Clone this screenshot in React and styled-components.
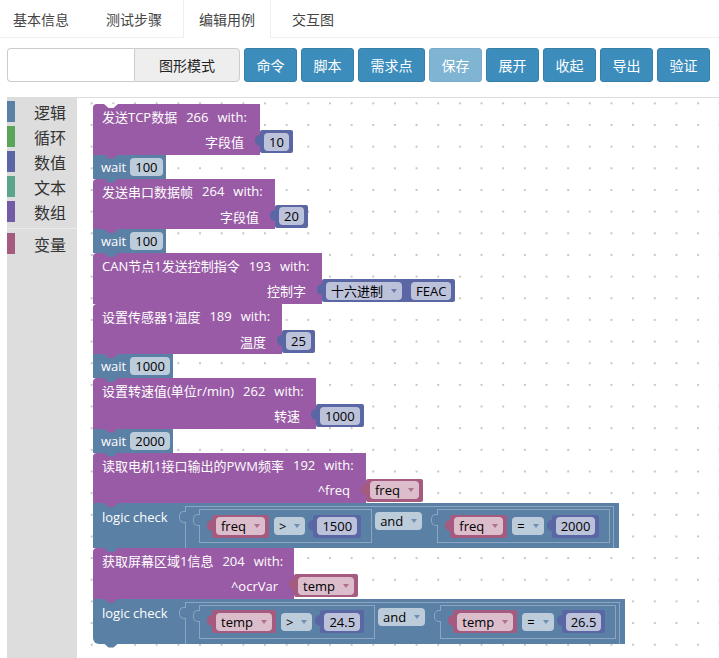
import React from 'react'
import styled, { createGlobalStyle } from 'styled-components'

const PURPLE = '#995ba5'
const LOGIC = '#5b80a5'
const MATH = '#5b67a5'
const VAR = '#a55b80'
const FIELD_BG = { [LOGIC]: '#bdccdb', [MATH]: '#bdc2db', [VAR]: '#dbbdcc' }

const GlobalStyle = createGlobalStyle`
    html, body, #root {
        height: 100%;
        margin: 0;
    }
    body {
        overflow: hidden;
        background: #fff;
        font-family: "Noto Sans CJK SC", sans-serif;
    }
`

const Page = styled.div`
    display: flex;
    flex-direction: column;
    height: 100%;
`

const TabBar = styled.div`
    display: flex;
    gap: 5px;
    height: 37px;
    margin-left: -3px;
    border-bottom: 1px solid #f0f0f0;
`

const Tab = styled.div`
    display: flex;
    align-items: center;
    box-sizing: border-box;
    height: 38px;
    padding: 0 15px;
    font-size: 14px;
    color: #444;
    background: ${p => p.$active ? '#fff' : 'transparent'};
    border-left: 1px solid ${p => p.$active ? '#eee' : 'transparent'};
    border-right: 1px solid ${p => p.$active ? '#eee' : 'transparent'};
`

const Toolbar = styled.div`
    display: flex;
    gap: 4px;
    height: 34px;
    margin: 10px 0 0 7px;
`

const InputGroup = styled.div`
    display: flex;
    width: 233px;
`

const TextBox = styled.div`
    flex: 1;
    border: 1px solid #ccc;
    border-right: none;
    border-radius: 4px 0 0 4px;
    background: #fff;
`

const Addon = styled.div`
    display: flex;
    align-items: center;
    padding: 0 24px;
    font-size: 14px;
    color: #222;
    background: #eee;
    border: 1px solid #ccc;
    border-radius: 0 4px 4px 0;
`

const Button = styled.div`
    display: flex;
    align-items: center;
    box-sizing: border-box;
    height: 34px;
    padding: 0 11.5px;
    font-size: 14px;
    color: #fff;
    background: #3c8dbc;
    border: 1px solid #367fa9;
    border-radius: 3px;
    opacity: ${p => p.$dim ? 0.65 : 1};
`

const Editor = styled.div`
    flex: 1;
    display: flex;
    min-height: 0;
    margin: 15px 0 0 7px;
    border-top: 1px solid #ddd;
`

const Toolbox = styled.div`
    width: 70px;
    padding-top: 1px;
    background: #ddd;
`

const Category = styled.div`
    display: flex;
    align-items: center;
    height: 25px;
    font-size: 16px;
    color: #333;
`

const Strip = styled.span`
    width: 8px;
    height: 21px;
    margin-right: 19px;
    background: ${p => p.$color};
`

const Separator = styled.div`
    height: 1px;
    margin: 4px 0 2px;
    background: #eaeaea;
`

const Workspace = styled.div`
    flex: 1;
    display: flex;
    flex-direction: column;
    align-items: flex-start;
    padding: 6px 0 0 16px;
    overflow: hidden;
    background-color: #fff;
    background-image: radial-gradient(circle, #c6c6c6 0 0.9px, transparent 1.3px);
    background-size: 21.67px 21.67px;
    background-position: 3.9px -5.5px;
    font-family: "Open Sans", "Noto Sans CJK SC", sans-serif;
    font-size: 13px;
    color: #fff;
    white-space: nowrap;
`

// statement blocks: tab at the bottom that pokes into the next block
const Stmt = styled.div`
    position: relative;
    display: flex;
    flex-direction: column;
    align-items: flex-start;
    &::after {
        content: '';
        position: absolute;
        left: 11px;
        bottom: -4px;
        width: 14px;
        height: 4px;
        background: ${p => p.$color};
        clip-path: polygon(0 0, 100% 0, 68% 100%, 32% 100%);
        z-index: 3;
    }
    &::before {
        content: '';
        display: ${p => p.$first ? 'block' : 'none'};
        position: absolute;
        left: 11px;
        top: 0;
        width: 14px;
        height: 4px;
        background: #fff;
        clip-path: polygon(0 0, 100% 0, 68% 100%, 32% 100%);
        z-index: 3;
    }
`

const Head = styled.div`
    display: flex;
    align-items: center;
    gap: 9px;
    box-sizing: border-box;
    width: ${p => p.$w}px;
    height: 25px;
    padding: 0 9px;
    background: ${PURPLE};
    border-top-left-radius: 4px;
`

const BodyRow = styled.div`
    display: flex;
    align-items: center;
`

const Body = styled.div`
    display: flex;
    align-items: center;
    justify-content: flex-end;
    box-sizing: border-box;
    width: ${p => p.$w}px;
    height: 25.5px;
    padding-right: 16px;
    background: ${PURPLE};
`

const WaitBlock = styled.div`
    display: flex;
    align-items: center;
    gap: 4px;
    height: 24px;
    padding: 0 3px 0 8px;
    background: ${LOGIC};
`

const Value = styled.div`
    position: relative;
    display: flex;
    align-items: center;
    gap: 9px;
    box-sizing: border-box;
    height: 23px;
    padding: 0 4px;
    background: ${p => p.$color};
    border-radius: 2px;
    &::before {
        content: '';
        position: absolute;
        left: -5px;
        top: 5px;
        width: 6px;
        height: 11px;
        background: ${p => p.$color};
        border-radius: 5px 0 0 5px;
    }
`

const Field = styled.span`
    display: inline-flex;
    align-items: center;
    gap: 8px;
    box-sizing: border-box;
    height: 18px;
    padding: 0 5px;
    font-size: 13px;
    line-height: 18px;
    color: #000;
    background: ${p => FIELD_BG[p.$color]};
    border-radius: 4px;
`

const Arrow = styled.i`
    width: 0;
    height: 0;
    border-left: 3px solid transparent;
    border-right: 3px solid transparent;
    border-top: 4px solid ${p => p.$color};
    opacity: 0.8;
`

const LogicBlock = styled.div`
    display: flex;
    box-sizing: border-box;
    height: 45px;
    padding: 3px 5px 0 0;
    background: ${LOGIC};
    border-bottom-left-radius: ${p => p.$last ? 6 : 0}px;
`

const LogicLabel = styled.div`
    box-sizing: border-box;
    width: 83px;
    padding-left: 9px;
    line-height: 22px;
`

const Slot = styled.div`
    position: relative;
    display: flex;
    align-items: flex-start;
    margin-left: ${p => p.$ml}px;
    &::before {
        content: '';
        position: absolute;
        left: -7px;
        top: 4px;
        width: 6px;
        height: 10px;
        border: 1px solid rgba(255, 255, 255, 0.3);
        border-right: none;
        border-radius: 5px 0 0 5px;
        background: ${LOGIC};
    }
`

const AndBlock = styled(Slot)`
    align-self: stretch;
    padding: 2px 3px 0 13px;
    border: 1px solid rgba(255, 255, 255, 0.3);
    border-bottom: none;
`

const CompareBlock = styled(Slot)`
    align-items: center;
    box-sizing: border-box;
    height: 34px;
    padding: 0 10px 0 12px;
    border: 1px solid rgba(255, 255, 255, 0.3);
`

const Op = styled(Field)`
    margin: 0 8px 0 5px;
`

const AndField = styled(Field)`
    margin: 3px 0 0 3px;
`

function Dropdown({ color, children }) {
    return <Field $color={color}>{children}<Arrow $color={color} /></Field>
}

function Num({ v }) {
    return <Value $color={MATH}><Field $color={MATH}>{v}</Field></Value>
}

function Var({ name }) {
    return <Value $color={VAR}><Dropdown color={VAR}>{name}</Dropdown></Value>
}

function Call({ w, title, id, label, first, children }) {
    return (
        <Stmt $color={PURPLE} $first={first}>
            <Head $w={w}><span>{title}</span><span>{id}</span><span>with:</span></Head>
            <BodyRow>
                <Body $w={w}>{label}</Body>
                {children}
            </BodyRow>
        </Stmt>
    )
}

function Wait({ ms }) {
    return (
        <Stmt $color={LOGIC}>
            <WaitBlock>wait<Field $color={LOGIC}>{ms}</Field></WaitBlock>
        </Stmt>
    )
}

function Compare({ name, op, v, ml }) {
    return (
        <CompareBlock $ml={ml}>
            <Var name={name} />
            <Op $color={LOGIC}>{op}<Arrow $color={LOGIC} /></Op>
            <Num v={v} />
        </CompareBlock>
    )
}

function LogicCheck({ a, b, last }) {
    return (
        <Stmt $color={LOGIC}>
            <LogicBlock $last={last}>
                <LogicLabel>logic check</LogicLabel>
                <AndBlock $ml={9}>
                    <Compare {...a} ml={0} />
                    <AndField $color={LOGIC}>and<Arrow $color={LOGIC} /></AndField>
                    <Compare {...b} ml={15} />
                </AndBlock>
            </LogicBlock>
        </Stmt>
    )
}

const tabs = ['基本信息', '测试步骤', '编辑用例', '交互图']
const buttons = ['命令', '脚本', '需求点', '保存', '展开', '收起', '导出', '验证']
const categories = [
    ['逻辑', LOGIC], ['循环', '#5ba55b'], ['数值', MATH], ['文本', '#5ba58c'], ['数组', '#745ba5'],
]

export default function App() {
    return (
        <>
            <GlobalStyle />
            <Page>
                <TabBar>
                    {tabs.map(t => <Tab key={t} $active={t === '编辑用例'}>{t}</Tab>)}
                </TabBar>
                <Toolbar>
                    <InputGroup>
                        <TextBox />
                        <Addon>图形模式</Addon>
                    </InputGroup>
                    {buttons.map(b => <Button key={b} $dim={b === '保存'}>{b}</Button>)}
                </Toolbar>
                <Editor>
                    <Toolbox>
                        {categories.map(([name, color]) => (
                            <Category key={name}><Strip $color={color} />{name}</Category>
                        ))}
                        <Separator />
                        <Category><Strip $color={VAR} />变量</Category>
                    </Toolbox>
                    <Workspace>
                        <Call first w={167} title="发送TCP数据" id={266} label="字段值"><Num v="10" /></Call>
                        <Wait ms="100" />
                        <Call w={182} title="发送串口数据帧" id={264} label="字段值"><Num v="20" /></Call>
                        <Wait ms="100" />
                        <Call w={229} title="CAN节点1发送控制指令" id={193} label="控制字">
                            <Value $color={MATH}>
                                <Dropdown color={MATH}>十六进制</Dropdown>
                                <Field $color={MATH}>FEAC</Field>
                            </Value>
                        </Call>
                        <Call w={189} title="设置传感器1温度" id={189} label="温度"><Num v="25" /></Call>
                        <Wait ms="1000" />
                        <Call w={223} title="设置转速值(单位r/min)" id={262} label="转速"><Num v="1000" /></Call>
                        <Wait ms="2000" />
                        <Call w={273} title="读取电机1接口输出的PWM频率" id={192} label="^freq"><Var name="freq" /></Call>
                        <LogicCheck
                            a={{ name: 'freq', op: '>', v: '1500' }}
                            b={{ name: 'freq', op: '=', v: '2000' }}
                        />
                        <Call w={201} title="获取屏幕区域1信息" id={204} label="^ocrVar"><Var name="temp" /></Call>
                        <LogicCheck
                            last
                            a={{ name: 'temp', op: '>', v: '24.5' }}
                            b={{ name: 'temp', op: '=', v: '26.5' }}
                        />
                    </Workspace>
                </Editor>
            </Page>
        </>
    )
}
